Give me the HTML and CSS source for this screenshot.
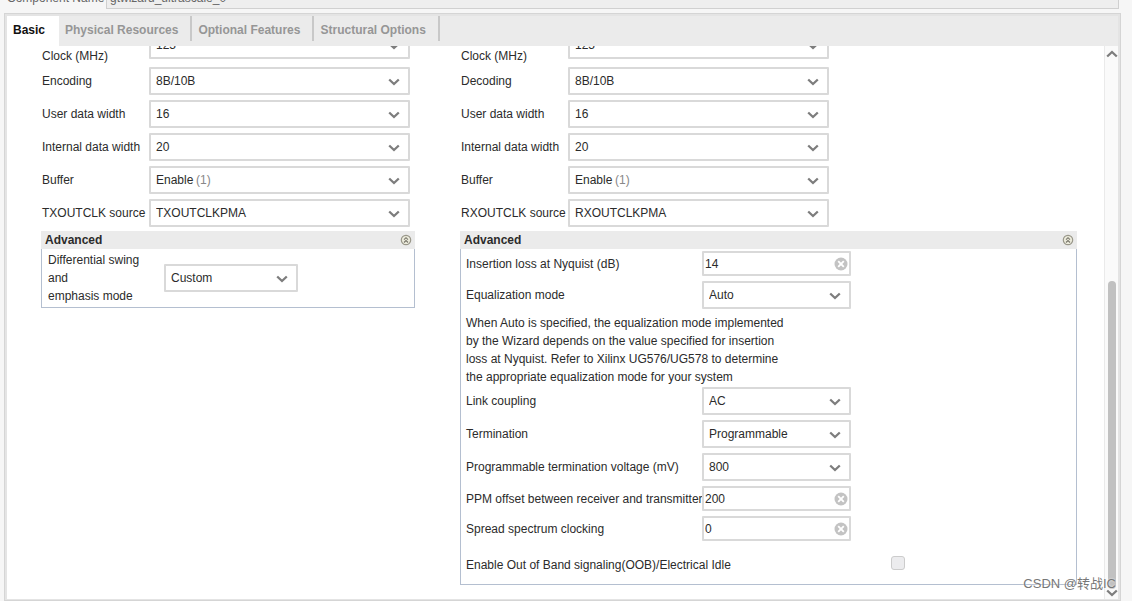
FILE: index.html
```html
<!DOCTYPE html>
<html lang="en">
<head>
<meta charset="utf-8">
<title>Component configuration</title>
<link rel="stylesheet" href="styles.css">
</head>
<body>
<svg class="symbols" aria-hidden="true">
  <symbol id="chevron" viewBox="0 0 12 8"><path d="M1.200 1.500 6 6l4.800-4.500" fill="none" stroke="currentColor" stroke-width="2.300"/></symbol>
  <symbol id="collapse" viewBox="0 0 12 12"><circle cx="6" cy="6" r="4.700" fill="#ecebdc" stroke="#99978a" stroke-width="1.200"/><path d="M4 5.700 6 3.700l2 2M4 8.500l2-2 2 2" fill="none" stroke="#77756a" stroke-width="1.100"/></symbol>
  <symbol id="clear" viewBox="0 0 14 14"><circle cx="7" cy="7" r="6.500" fill="#c3c3c3"/><path d="m4.200 4.200 5.600 5.600m0-5.600L4.200 9.800" stroke="#fff" stroke-width="1.900"/></symbol>
</svg>

<div class="name-bar">
  <label for="component-name">Component Name</label>
  <input id="component-name" class="name-input" value="gtwizard_ultrascale_0">
</div>

<main class="panel">
  <nav class="tabs">
    <button class="tab active">Basic</button>
    <button class="tab">Physical Resources</button>
    <button class="tab">Optional Features</button>
    <button class="tab">Structural Options</button>
  </nav>
  <div class="view">
    <div class="columns">
      <section class="column">
        <div class="row clock-row"><label for="tx-clock">Clock (MHz)</label><div class="select"><select id="tx-clock"><option>125</option></select><svg><use href="#chevron"/></svg></div></div>
        <div class="row"><label for="encoding">Encoding</label><div class="select"><select id="encoding"><option>8B/10B</option></select><svg><use href="#chevron"/></svg></div></div>
        <div class="row"><label for="tx-user">User data width</label><div class="select"><select id="tx-user"><option>16</option></select><svg><use href="#chevron"/></svg></div></div>
        <div class="row"><label for="tx-internal">Internal data width</label><div class="select"><select id="tx-internal"><option>20</option></select><svg><use href="#chevron"/></svg></div></div>
        <div class="row"><label for="tx-buffer">Buffer</label><div class="select"><select id="tx-buffer"><option>Enable</option></select><span class="hint">(1)</span><svg><use href="#chevron"/></svg></div></div>
        <div class="row"><label for="tx-source">TXOUTCLK source</label><div class="select"><select id="tx-source"><option>TXOUTCLKPMA</option></select><svg><use href="#chevron"/></svg></div></div>
        <section class="advanced">
          <header><h2>Advanced</h2><button class="collapse" aria-label="Collapse"><svg><use href="#collapse"/></svg></button></header>
          <div class="group swing">
            <label for="swing">Differential swing<br>and<br>emphasis mode</label>
            <div class="select"><select id="swing"><option>Custom</option></select><svg><use href="#chevron"/></svg></div>
          </div>
        </section>
      </section>

      <section class="column">
        <div class="row clock-row"><label for="rx-clock">Clock (MHz)</label><div class="select"><select id="rx-clock"><option>125</option></select><svg><use href="#chevron"/></svg></div></div>
        <div class="row"><label for="decoding">Decoding</label><div class="select"><select id="decoding"><option>8B/10B</option></select><svg><use href="#chevron"/></svg></div></div>
        <div class="row"><label for="rx-user">User data width</label><div class="select"><select id="rx-user"><option>16</option></select><svg><use href="#chevron"/></svg></div></div>
        <div class="row"><label for="rx-internal">Internal data width</label><div class="select"><select id="rx-internal"><option>20</option></select><svg><use href="#chevron"/></svg></div></div>
        <div class="row"><label for="rx-buffer">Buffer</label><div class="select"><select id="rx-buffer"><option>Enable</option></select><span class="hint">(1)</span><svg><use href="#chevron"/></svg></div></div>
        <div class="row"><label for="rx-source">RXOUTCLK source</label><div class="select"><select id="rx-source"><option>RXOUTCLKPMA</option></select><svg><use href="#chevron"/></svg></div></div>
        <section class="advanced">
          <header><h2>Advanced</h2><button class="collapse" aria-label="Collapse"><svg><use href="#collapse"/></svg></button></header>
          <div class="group receiver">
            <div class="row"><label for="loss">Insertion loss at Nyquist (dB)</label><div class="entry"><input id="loss" value="14"><button aria-label="Clear"><svg><use href="#clear"/></svg></button></div></div>
            <div class="row"><label for="equalization">Equalization mode</label><div class="select"><select id="equalization"><option>Auto</option></select><svg><use href="#chevron"/></svg></div></div>
            <p class="note">When Auto is specified, the equalization mode implemented<br>by the Wizard depends on the value specified for insertion<br>loss at Nyquist. Refer to Xilinx UG576/UG578 to determine<br>the appropriate equalization mode for your system</p>
            <div class="row"><label for="coupling">Link coupling</label><div class="select"><select id="coupling"><option>AC</option></select><svg><use href="#chevron"/></svg></div></div>
            <div class="row"><label for="termination">Termination</label><div class="select"><select id="termination"><option>Programmable</option></select><svg><use href="#chevron"/></svg></div></div>
            <div class="row"><label for="voltage">Programmable termination voltage (mV)</label><div class="select"><select id="voltage"><option>800</option></select><svg><use href="#chevron"/></svg></div></div>
            <div class="row"><label for="ppm">PPM offset between receiver and transmitter</label><div class="entry"><input id="ppm" value="200"><button aria-label="Clear"><svg><use href="#clear"/></svg></button></div></div>
            <div class="row"><label for="spread">Spread spectrum clocking</label><div class="entry"><input id="spread" value="0"><button aria-label="Clear"><svg><use href="#clear"/></svg></button></div></div>
            <div class="oob"><label for="oob">Enable Out of Band signaling(OOB)/Electrical Idle</label><input id="oob" type="checkbox" disabled></div>
          </div>
        </section>
      </section>
    </div>
    <div class="scrollbar">
      <button class="up" aria-label="Scroll up"><svg><use href="#chevron"/></svg></button>
      <div class="track"><div class="thumb"></div></div>
      <button aria-label="Scroll down"><svg><use href="#chevron"/></svg></button>
    </div>
  </div>
</main>
<div class="watermark">CSDN @转战IC</div>
</body>
</html>
```
FILE: styles.css
```css
* { box-sizing: border-box; }
body {
  margin: 0;
  height: 100vh;
  overflow: hidden;
  display: flex;
  flex-direction: column;
  background: #f6f6f6;
  color: #2b2b2b;
  font: 12px/18px "Liberation Sans", Arial, sans-serif;
}
input, select, button { font: inherit; color: inherit; }
button { border: 0; padding: 0; background: none; }
svg { display: block; }
.symbols { display: none; }

.name-bar {
  flex: none;
  display: flex;
  align-items: center;
  height: 24px;
  margin: -15px 13px 4px 7px;
  color: #666;
}
.name-bar label { flex: 0 0 99px; padding-top: 2px; }
.name-input {
  flex: 1;
  height: 24px;
  padding: 2px 3px 0;
  border: 1px solid #d0d0d0;
  background: #eee;
}

.panel {
  flex: 1;
  min-height: 0;
  display: flex;
  flex-direction: column;
  margin: 0 11px 0 4px;
  border: solid #e4e4e4;
  border-width: 3px 3px 2px;
  outline: 1px solid #d5d5d5;
  outline-offset: -1px;
}
.tabs {
  flex: none;
  display: flex;
  height: 30px;
  background: #ebebeb;
}
.tab {
  position: relative;
  padding: 0 14px 2px 6px;
  color: #969696;
  font-weight: bold;
  text-align: left;
  white-space: nowrap;
}
.tab:not(.active)::after {
  content: "";
  position: absolute;
  right: 0;
  top: 0;
  width: 2px;
  height: 25px;
  background: #c8c8c8;
}
.tab.active { background: #fff; color: #111; }

.view {
  flex: 1;
  min-height: 0;
  display: flex;
  background: #fff;
}
.columns {
  flex: 1;
  min-width: 0;
  overflow: hidden;
  display: grid;
  grid-template-columns: 374fr 617fr;
  column-gap: 45px;
  align-items: start;
  padding: 0 27px 0 34px;
}
.column { margin-top: -15px; }
.row {
  display: flex;
  align-items: center;
  margin-bottom: 5px;
}
.row label { flex: 0 0 108px; padding-left: 1px; white-space: nowrap; }
.clock-row { height: 34px; align-items: flex-start; margin-bottom: 2px; }
.clock-row label { align-self: flex-end; }

.select { position: relative; flex: 0 0 261px; }
.select select {
  display: block;
  appearance: none;
  width: 100%;
  height: 28px;
  padding: 0 24px 0 5px;
  border: 2px solid #d9d9d9;
  border-radius: 1px;
  background: #fff;
}
.select svg {
  position: absolute;
  right: 10px;
  top: 11px;
  width: 12px;
  height: 8px;
  color: #7d7d7d;
  pointer-events: none;
}
.hint {
  position: absolute;
  left: 47px;
  top: 5px;
  color: #888;
  pointer-events: none;
}

.advanced header {
  display: flex;
  align-items: center;
  justify-content: space-between;
  height: 18px;
  padding: 0 3px 0 4px;
  background: #ebebeb;
}
.advanced { margin-top: -1px; }
.advanced h2 { margin: 0; font-size: 12px; }
.collapse svg { width: 12px; height: 12px; }
.group { border: 1px solid #b4bfd0; border-top: 0; }
.swing {
  display: flex;
  align-items: center;
  padding: 2px 6px;
}
.swing label { flex: 0 0 116px; }
.swing .select { flex-basis: 134px; }

.receiver { padding: 2px 6px 10px 5px; }
.receiver .row label { flex-basis: 236px; min-width: 0; padding-left: 0; }
.receiver .select, .entry { flex: 0 0 149px; min-width: 0; }
.note { margin: 0 0 1px; white-space: nowrap; }
.entry {
  display: flex;
  align-items: center;
  height: 25px;
  padding-right: 1px;
  border: 2px solid #d9d9d9;
  border-radius: 1px;
}
.entry input {
  flex: 1;
  min-width: 0;
  border: 0;
  padding: 0 1px;
  background: none;
}
.entry svg { width: 14px; height: 14px; }
.oob { display: flex; align-items: flex-start; padding-top: 10px; }
.oob label { flex: 0 0 425px; }
.oob input {
  appearance: none;
  width: 14px;
  height: 14px;
  margin: 0;
  border: 1px solid #ccc;
  border-radius: 3px;
  background: #ececee;
}

.scrollbar {
  flex: 0 0 14px;
  display: flex;
  flex-direction: column;
  align-items: center;
  padding: 4px 0 2px;
  border-left: 1px solid #eaeaea;
  background: #fafafa;
}
.scrollbar svg { width: 12px; height: 8px; color: #7d7d7d; }
.up svg { transform: rotate(180deg); }
.track {
  flex: 1;
  display: flex;
  flex-direction: column;
  justify-content: flex-end;
}
.thumb {
  width: 8px;
  height: 58%;
  border-radius: 4px;
  background: #c1c1c1;
}
.watermark {
  position: absolute;
  right: 16px;
  bottom: 8px;
  color: #777;
  font: 13px/18px "Liberation Sans", "Noto Sans CJK SC", sans-serif;
  text-shadow: 0 0 2px #fff;
  white-space: nowrap;
}
```
